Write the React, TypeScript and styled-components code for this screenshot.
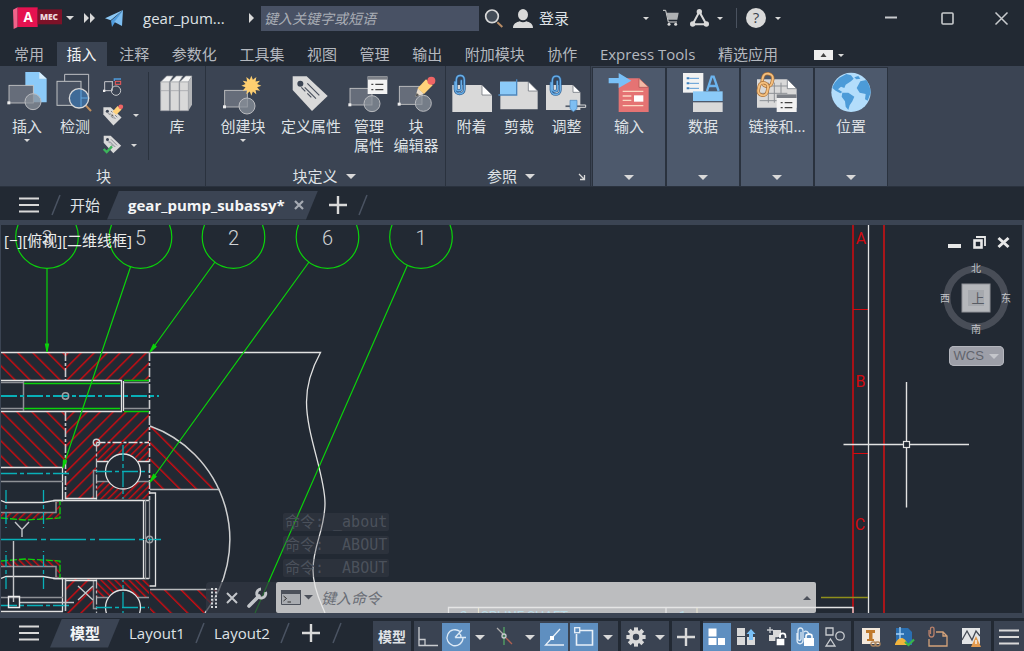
import React from "react";
import styled, { createGlobalStyle, css } from "styled-components";

const color = {
  base: "#222933",
  panel: "#3b4453",
  raised: "#4d596c",
  line: "#2a323e",
  text: "#dfe2e6",
  dim: "#b4b8bf",
  glyph: "#d9d9d9",
  active: "#5f8fc0",
};

const Global = createGlobalStyle`
  * { box-sizing: border-box; }
  body {
    margin: 0;
    background: ${color.base};
    color: ${color.text};
    font-family: "Open Sans", "Noto Sans CJK SC", sans-serif;
    font-size: 15px;
    line-height: 20px;
  }
  button, input { font: inherit; color: inherit; border: 0; padding: 0; margin: 0; background: none; }
  svg { display: block; flex: none; overflow: visible; }
`;

const App = styled.div`
  display: flex;
  flex-direction: column;
  min-height: 100vh;
`;

/* ---------- shared parts ---------- */

const IconButton = styled.button<{ $w?: number }>`
  display: flex;
  align-items: center;
  justify-content: center;
  flex: none;
  width: ${(p) => p.$w ?? 20}px;
  height: 28px;
`;

const Down = ({ w = 8, c = color.glyph }: { w?: number; c?: string }) => (
  <svg width={w} height={w / 2} viewBox="0 0 8 4">
    <path d="M0 0H8L4 4Z" fill={c} />
  </svg>
);

const Slash = () => (
  <svg width="10" height="20" viewBox="0 0 10 20">
    <path d="M9 0L1 20" stroke="#4a5362" strokeWidth="1.5" />
  </svg>
);

const Menu = () => (
  <svg width="20" height="16" viewBox="0 0 20 16">
    <path d="M0 1.5H20M0 8H20M0 14.5H20" stroke={color.glyph} strokeWidth="2" />
  </svg>
);

const Plus = ({ s = 18 }: { s?: number }) => (
  <svg width={s} height={s} viewBox="0 0 18 18">
    <path d="M9 0V18M0 9H18" stroke={color.glyph} strokeWidth="2.4" />
  </svg>
);

/* ---------- title bar ---------- */

const TitleBar = styled.header`
  display: flex;
  align-items: center;
  height: 36px;
  padding-left: 13px;
`;

const FileName = styled.h1`
  margin: 0 0 0 16px;
  width: 98px;
  font-size: 15px;
  font-weight: 400;
  line-height: 20px;
  white-space: nowrap;
`;

const SearchBox = styled.input`
  flex: 0 1 218px;
  min-width: 80px;
  height: 25px;
  padding: 0 3px;
  background: #485164;
  font-size: 14px;
  &::placeholder { color: #a9adb5; opacity: 1; font-style: italic; }
`;

const Account = styled.button`
  display: flex;
  align-items: center;
  gap: 6px;
  margin-left: 5px;
  white-space: nowrap;
`;

const TitleTools = styled.div`
  display: flex;
  align-items: center;
  margin-left: 69px;
`;

const Divider = styled.span`
  width: 1px;
  height: 20px;
  margin: 0 9px 0 7px;
  background: #4a525f;
`;

const WindowButtons = styled.div`
  display: flex;
  margin-left: auto;
  margin-right: -3px;
`;

const Title = () => (
  <TitleBar>
    <IconButton $w={49} aria-label="应用程序菜单">
      <svg width="49" height="22" viewBox="40 22 147 66">
        <path d="M40 30L54 23V82L42 88Z" fill="#f0628a" />
        <path d="M54 23H114V82H54Z" fill="#e51250" />
        <path d="M114 29H187V74H114Z" fill="#7d1228" />
        <text x="85" y="66" fontSize="40" fontWeight="700" fontFamily="Open Sans, sans-serif" textAnchor="middle" fill="#fff">A</text>
        <text x="148" y="61" fontSize="25" fontWeight="800" fontFamily="Open Sans, sans-serif" textAnchor="middle" fill="#eed8dd">MEC</text>
      </svg>
    </IconButton>
    <IconButton $w={16} aria-label="展开菜单"><Down /></IconButton>
    <IconButton $w={22} aria-label="更多工具">
      <svg width="11" height="10" viewBox="0 0 11 10"><path d="M0 0L5 5L0 10ZM6 0L11 5L6 10Z" fill={color.glyph} /></svg>
    </IconButton>
    <IconButton $w={27} aria-label="共享">
      <svg width="18" height="17" viewBox="320 26 54 51">
        <path d="M374 26L320 51L337 57Z" fill="#8cc8f5" />
        <path d="M374 26L338 58L341 77L349 64Z" fill="#4f9bdc" />
        <path d="M374 26L348 62L371 74Z" fill="#7dbef2" />
      </svg>
    </IconButton>
    <FileName>gear_pum...</FileName>
    <IconButton $w={20} aria-label="展开搜索">
      <svg width="5" height="10" viewBox="0 0 5 10"><path d="M0 0L5 5L0 10Z" fill={color.glyph} /></svg>
    </IconButton>
    <SearchBox aria-label="搜索" placeholder="键入关键字或短语" />
    <IconButton $w={29} aria-label="搜索">
      <svg width="19" height="19" viewBox="1450 24 57 57">
        <path d="M1490 64L1505 78" stroke="#b98d66" strokeWidth="6" />
        <circle cx="1474" cy="46" r="19" fill="#434c57" stroke="#d9d9d9" strokeWidth="5" />
      </svg>
    </IconButton>
    <Account>
      <svg width="20" height="19" viewBox="0 0 60 57">
        <ellipse cx="30" cy="17" rx="15" ry="17" fill={color.glyph} />
        <path d="M0 57C0 44 10 40 20 37C26 41 34 41 40 37C50 40 60 44 60 57Z" fill={color.glyph} />
      </svg>
      登录
    </Account>
    <TitleTools>
      <IconButton $w={16} aria-label="帐户菜单"><Down w={6} /></IconButton>
      <IconButton $w={34} aria-label="应用商店">
        <svg width="16" height="16" viewBox="454 30 48 48">
          <path d="M454 31H462L470 66H496" fill="none" stroke={color.glyph} strokeWidth="3" />
          <path d="M464 38H501L497 59H469Z" fill="#aeb0b3" />
          <circle cx="472" cy="73" r="4.5" fill={color.glyph} />
          <circle cx="492" cy="73" r="4.5" fill={color.glyph} />
        </svg>
      </IconButton>
      <IconButton $w={23} aria-label="Autodesk">
        <svg width="19" height="18" viewBox="535 26 57 54">
          <path d="M563 34L543 72H584Z" fill="none" stroke={color.glyph} strokeWidth="6" />
          <circle cx="563" cy="34" r="8" fill={color.glyph} />
          <circle cx="543" cy="71" r="8" fill={color.glyph} />
          <circle cx="584" cy="71" r="8" fill={color.glyph} />
        </svg>
      </IconButton>
      <IconButton $w={18} aria-label="Autodesk 菜单"><Down w={6} /></IconButton>
      <Divider />
      <IconButton aria-label="帮助">
        <svg width="20" height="20" viewBox="0 0 20 20">
          <circle cx="10" cy="10" r="10" fill={color.glyph} />
          <text x="10" y="15" fontSize="15" fontWeight="400" fontFamily="Open Sans, sans-serif" textAnchor="middle" fill="#3c434d">?</text>
        </svg>
      </IconButton>
      <IconButton $w={24} aria-label="帮助菜单"><Down w={6} /></IconButton>
    </TitleTools>
    <WindowButtons>
      <IconButton $w={56} aria-label="最小化">
        <svg width="12" height="12" viewBox="0 0 12 12"><path d="M0 5.5H12" stroke="#c9cbce" strokeWidth="2" /></svg>
      </IconButton>
      <IconButton $w={57} aria-label="最大化">
        <svg width="13" height="13" viewBox="0 0 13 13"><rect x="1" y="1" width="11" height="11" rx="1" fill="none" stroke="#c9cbce" strokeWidth="1.6" /></svg>
      </IconButton>
      <IconButton $w={51} aria-label="关闭">
        <svg width="13" height="13" viewBox="0 0 13 13"><path d="M.5.5L12.5 12.5M12.5.5L.5 12.5" stroke="#c9cbce" strokeWidth="1.5" /></svg>
      </IconButton>
    </WindowButtons>
  </TitleBar>
);

/* ---------- ribbon tabs ---------- */

const TabRow = styled.nav`
  display: flex;
  align-items: flex-end;
  height: 30px;
  padding-left: 4px;
`;

const TabList = styled.div`
  display: flex;
  justify-content: space-between;
  flex: 0 1 784px;
`;

const RibbonTab = styled.button<{ $on?: boolean }>`
  height: 24px;
  padding: 0 10px;
  line-height: 24px;
  white-space: nowrap;
  color: ${(p) => (p.$on ? "#f2f3f5" : color.dim)};
  background: ${(p) => (p.$on ? color.panel : "transparent")};
`;

const tabs = ["常用", "插入", "注释", "参数化", "工具集", "视图", "管理", "输出", "附加模块", "协作", "Express Tools", "精选应用"];

const MinimizeRibbon = styled.button`
  display: flex;
  align-items: center;
  gap: 5px;
  height: 22px;
  margin-left: 26px;
`;

/* ---------- ribbon ---------- */

const Ribbon = styled.section`
  display: flex;
  height: 121px;
  padding-left: 1px;
  background: ${color.panel};
  border-bottom: 1px solid ${color.line};
`;

const Panel = styled.section<{ $w: number; $pad?: number }>`
  display: flex;
  flex-direction: column;
  flex: none;
  width: ${(p) => p.$w}px;
  padding: 6px 0 0 ${(p) => p.$pad ?? 0}px;
  border-right: 1px solid ${color.line};
`;

const PanelBody = styled.div`
  display: flex;
  flex: 1;
`;

const PanelFoot = styled.footer<{ $end?: number }>`
  display: flex;
  align-items: center;
  justify-content: center;
  gap: 8px;
  height: 20px;
  padding-right: ${(p) => p.$end ?? 0}px;
  position: relative;
`;

const Launcher = styled.button`
  position: absolute;
  right: 5px;
  bottom: 6px;
`;

const Tool = styled.button<{ $w: number }>`
  display: flex;
  flex-direction: column;
  align-items: center;
  flex: none;
  width: ${(p) => p.$w}px;
  & > span { margin: 5px 0 3px; line-height: 19px; white-space: pre; text-align: center; }
`;

const SmallTools = styled.div`
  display: flex;
  flex-direction: column;
  width: 51px;
  height: 88px;
  padding-left: 5px;
  border-right: 1px solid ${color.line};
`;

const SmallTool = styled.button`
  display: flex;
  align-items: center;
  gap: 10px;
  height: 30px;
`;

const Collapsed = styled.button`
  display: flex;
  flex-direction: column;
  align-items: center;
  flex: none;
  width: 72px;
  height: 118px;
  margin: 2px 0 0 2px;
  padding: 4px 0 6px;
  background: ${color.raised};
  outline: 1px solid ${color.line};
  & > span { margin-top: 5px; line-height: 19px; }
  & > svg:last-child { margin-top: auto; }
`;

const Big = ({ x, children }: { x: number; children: React.ReactNode }) => (
  <svg width="40" height="40" viewBox={`${x} 18 120 120`}>{children}</svg>
);

const Block = ({ x, y, w = 75, h = 54, cx, cy }: { x: number; y: number; w?: number; h?: number; cx: number; cy: number }) => (
  <g>
    <rect x={x} y={y} width={w} height={h} fill="#666d7a" stroke="#c9c9c9" strokeWidth="2.5" />
    <circle cx={cx} cy={cy} r="24" fill="#8a909a" fillOpacity=".75" stroke="#b9bbbf" strokeWidth="3" />
    <rect x={x - 5} y={y + h - 5} width="9" height="9" fill="#eee" />
  </g>
);

const Sheet = ({ x, y, w, h, f = 26 }: { x: number; y: number; w: number; h: number; f?: number }) => (
  <g>
    <path d={`M${x} ${y}H${x + w - f}L${x + w} ${y + f}V${y + h}H${x}Z`} fill="#d9d9d9" />
    <path d={`M${x + w - f} ${y}V${y + f}H${x + w}Z`} fill="#fff" stroke="#5a606b" strokeWidth="2" />
  </g>
);

const Clip = ({ x, y }: { x: number; y: number }) => (
  <g transform={`translate(${x} ${y})`} fill="none" strokeLinecap="round">
    <path d="M3 20V42C3 60 31 60 31 42V14C31 -4 7 -4 7 14V40C7 48 22 48 22 40V16" stroke="#2f5f92" strokeWidth="8" />
    <path d="M3 20V42C3 60 31 60 31 42V14C31 -4 7 -4 7 14V40C7 48 22 48 22 40V16" stroke="#69aee6" strokeWidth="4" />
  </g>
);

const Tag = ({ t }: { t?: string }) => (
  <g transform={t}>
    <path d="M8 31H50L113 90L66 135L8 72Z" fill="#d9d9d9" />
    <circle cx="31" cy="53" r="9" fill="#3b4453" />
    <path d="M52 52L88 88M44 64L78 98M34 64L46 76M52 82L64 94" stroke="#4a515e" strokeWidth="3.5" />
  </g>
);

const Pencil = ({ t }: { t?: string }) => (
  <g transform={t}>
    <path d="M376 92L384 66L402 84Z" fill="#e8dccb" />
    <path d="M383 67L408 40L428 58L402 84Z" fill="#ffd27a" />
    <circle cx="424" cy="44" r="12" fill="#ef6565" />
    <path d="M376 92L380 81L388 88Z" fill="#555" />
  </g>
);

const Star = () => {
  const pts = Array.from({ length: 24 }, (_, i) => {
    const r = i % 2 ? 18 : 30;
    const a = (i * Math.PI) / 12;
    return `${(755 + r * Math.sin(a)).toFixed(1)},${(59 - r * Math.cos(a)).toFixed(1)}`;
  });
  return <polygon points={pts.join(" ")} fill="#ffcf70" />;
};

const RibbonPanels = () => (
  <Ribbon>
    <Panel $w={205} $pad={1}>
      <PanelBody>
        <Tool $w={50}>
          <Big x={22}>
            <path d="M77 18H119L141 38V109H77Z" fill="#8bcaf8" />
            <path d="M119 18V38H141Z" fill="#d9effd" />
            <Block x={28} y={58} w={73} h={53} cx={100} cy={107} />
          </Big>
          <span>插入</span><Down w={6} />
        </Tool>
        <Tool $w={46}>
          <Big x={165}>
            <path d="M194 46V25H266V98" fill="none" stroke="#bfc1c4" strokeWidth="3" />
            <rect x="171" y="46" width="72" height="72" fill="#495262" stroke="#bfc1c4" strokeWidth="3" />
            <path d="M257 118L273 135" stroke="#c08e5c" strokeWidth="6" />
            <circle cx="237" cy="97" r="29" fill="#3f6a97" stroke="#d9d9d9" strokeWidth="4" />
            <path d="M243 72V122M243 96H264" stroke="#62a7e0" strokeWidth="3" />
          </Big>
          <span>检测</span>
        </Tool>
        <SmallTools>
          <SmallTool aria-label="编辑参照">
            <svg width="20" height="20" viewBox="306 26 60 60">
              <path d="M311 40H336M311 40V67H334V40" fill="none" stroke="#c5c7ca" strokeWidth="3" />
              <circle cx="345" cy="67" r="14" fill="none" stroke="#c5c7ca" strokeWidth="3" />
              <path d="M340 38V32H360" fill="none" stroke="#4f9bdc" strokeWidth="4" />
              <rect x="343" y="39" width="16" height="9" fill="none" stroke="#ef5a5a" strokeWidth="3" />
              <path d="M306 64h7v7h-7z" fill="#eee" />
            </svg>
          </SmallTool>
          <SmallTool aria-label="编辑属性">
            <svg width="20" height="20" viewBox="306 117 60 60">
              <Tag t="translate(303 105) scale(.52)" />
              <Pencil t="translate(105 93) scale(.6)" />
            </svg>
            <Down w={6} />
          </SmallTool>
          <SmallTool aria-label="同步属性">
            <svg width="18" height="20" viewBox="309 207 54 60">
              <Tag t="translate(307 194) scale(.5)" />
              <path d="M311 249L320 258L336 241" fill="none" stroke="#3cb55a" strokeWidth="7" />
            </svg>
            <Down w={6} />
          </SmallTool>
        </SmallTools>
        <Tool $w={56}>
          <Big x={477}>
            {[488, 517, 545].map((x) => (
              <g key={x}>
                <path d={`M${x} 48L${x + 18} 30H${x + 37}L${x + 26} 48Z`} fill="#f4f4f4" stroke="#9a9da2" strokeWidth="2" />
                <path d={`M${x} 48H${x + 26}V134H${x}Z`} fill="#d9d9d9" stroke="#a3a6ab" strokeWidth="2" />
                <path d={`M${x} 74H${x + 26}`} stroke="#9a9da2" strokeWidth="2" />
              </g>
            ))}
            <path d="M571 48L582 30V116L571 134Z" fill="#b4b6b9" />
          </Big>
          <span>库</span>
        </Tool>
      </PanelBody>
      <PanelFoot>块</PanelFoot>
    </Panel>

    <Panel $w={240} $pad={3}>
      <PanelBody>
        <Tool $w={68}>
          <Big x={670}><Block x={675} y={73} w={68} h={50} cx={742} cy={120} /><Star /></Big>
          <span>创建块</span><Down w={6} />
        </Tool>
        <Tool $w={68}><Big x={3}><Tag /></Big><span>定义属性</span></Tool>
        <Tool $w={48}>
          <Big x={177}>
            <Block x={180} y={67} w={66} h={50} cx={246} cy={113} />
            <rect x="233" y="31" width="59" height="53" fill="#f2f2f2" />
            <path d="M233 31H292V41H233Z" fill="#7b7f86" />
            <path d="M244 55h6M244 71h6M256 55H280M256 71H280" stroke="#444" strokeWidth="4" />
          </Big>
          <span>{"管理\n属性"}</span>
        </Tool>
        <Tool $w={46}>
          <Big x={318}><Block x={328} y={61} w={68} h={54} cx={400} cy={112} /><Pencil /></Big>
          <span>{"块\n编辑器"}</span>
        </Tool>
      </PanelBody>
      <PanelFoot $end={6}>块定义 <Down w={10} /></PanelFoot>
    </Panel>

    <Panel $w={145} $pad={2}>
      <PanelBody>
        <Tool $w={47}><Big x={483}><Sheet x={484} y={57} w={119} h={81} f={30} /><Clip x={489} y={28} /></Big><span>附着</span></Tool>
        <Tool $w={48}>
          <Big x={627}>
            <Sheet x={631} y={47} w={112} h={83} f={28} />
            <rect x="630" y="47" width="48" height="39" fill="#8bcaf8" />
            <path d="M625 87H680V40" fill="none" stroke="#4b86bd" strokeWidth="4" />
          </Big>
          <span>剪裁</span>
        </Tool>
        <Tool $w={47}>
          <Big x={768}>
            <Sheet x={765} y={57} w={103} h={75} f={22} /><Clip x={777} y={30} />
            <path d="M822 117H884V124H822Z" fill="#3b4453" stroke="#d9d9d9" strokeWidth="3" />
            <path d="M837 103H858V128L847 137L837 128Z" fill="#7dbef2" stroke="#4b86bd" strokeWidth="2" />
          </Big>
          <span>调整</span>
        </Tool>
      </PanelBody>
      <PanelFoot $end={16}>
        参照 <Down w={10} />
        <Launcher aria-label="参照设置">
          <svg width="6" height="6" viewBox="0 0 6 6"><path d="M0 0L5 5M5.5 1V5.5H1" stroke={color.glyph} strokeWidth="1.3" fill="none" /></svg>
        </Launcher>
      </PanelFoot>
    </Panel>

    <Collapsed>
      <Big x={70}>
        <path d="M99 37H160L189 64V138H99Z" fill="#e57373" />
        <path d="M160 37V64H189Z" fill="#f3b9a5" stroke="#a94f50" strokeWidth="2" />
        <path d="M111 76H173M111 90H137M111 103H137M111 119H173" stroke="#fbd9c3" strokeWidth="4" />
        <path d="M145 88H173V107H145Z" fill="#fff" />
        <path d="M69 36H99V21L137 44L99 66V52H69Z" fill="#79c0f7" />
      </Big>
      <span>输入</span><Down w={10} />
    </Collapsed>
    <Collapsed>
      <Big x={292}>
        <path d="M292 21H353V80H292Z" fill="#f2f2f2" />
        <path d="M303 37h8M303 52h8M303 67h8" stroke="#3d7fbb" strokeWidth="6" />
        <path d="M311 37H340M311 52H340M311 67H340" stroke="#5b9bd5" strokeWidth="3" />
        <path d="M364 75L378 32H384L399 75M368 60H395" fill="none" stroke="#6cb4ee" strokeWidth="7" />
        <path d="M322 76H411V105H322Z" fill="#8bcaf8" />
        <path d="M322 109H411V138H322Z" fill="#d9d9d9" />
      </Big>
      <span>数据</span><Down w={10} />
    </Collapsed>
    <Collapsed>
      <Big x={514}>
        <Sheet x={514} y={40} w={119} h={85} f={28} />
        <path d="M532 60H605M522 82H605M522 104H575M548 50V110M566 50V110M586 50V84" stroke="#8d9196" strokeWidth="3" />
        <path d="M573 85H633V138H573Z" fill="#f2f2f2" />
        <path d="M573 85H633V96H573Z" fill="#7b7f86" />
        <path d="M585 110h6M585 125h6M597 110H620M597 125H620" stroke="#444" strokeWidth="4" />
        <g fill="none">
          <rect x="530" y="23" width="30" height="38" rx="14" stroke="#a8703a" strokeWidth="10" transform="rotate(12 545 44)" />
          <rect x="530" y="23" width="30" height="38" rx="14" stroke="#f5c07e" strokeWidth="6" transform="rotate(12 545 44)" />
          <rect x="519" y="50" width="27" height="38" rx="13" stroke="#a8703a" strokeWidth="10" transform="rotate(12 532 69)" />
          <rect x="519" y="50" width="27" height="38" rx="13" stroke="#f5c07e" strokeWidth="6" transform="rotate(12 532 69)" />
        </g>
      </Big>
      <span>链接和...</span><Down w={10} />
    </Collapsed>
    <Collapsed>
      <Big x={736}>
        <circle cx="796" cy="79" r="59" fill="#b3ddfb" />
        <path d="M760 36C752 44 742 55 740 66L750 74L764 82L770 78L757 70L766 62L776 66L780 56L796 46L804 38L796 28L782 24Z" fill="#4c9bd8" />
        <path d="M770 80L788 80L806 92L800 106L792 118L788 132L780 122L778 106L768 92Z" fill="#4c9bd8" />
        <path d="M818 30L806 34L812 40L824 38ZM824 46L842 42C850 54 855 68 855 80L846 104L838 100L840 84L822 80L813 66Z" fill="#4c9bd8" />
      </Big>
      <span>位置</span><Down w={10} />
    </Collapsed>
  </Ribbon>
);

/* ---------- document tabs ---------- */

const DocTabs = styled.nav`
  display: flex;
  align-items: center;
  height: 32px;
  margin-top: 1px;
  padding: 2px 0 0 15px;
`;

const Sheared = styled.div<{ $h: number }>`
  display: flex;
  align-items: center;
  height: ${(p) => p.$h}px;
  background: ${color.panel};
  clip-path: polygon(12px 0, 100% 0, calc(100% - 12px) 100%, 0 100%);
  color: #f4f5f6;
  font-weight: 700;
`;

const DocTab = styled(Sheared)`
  gap: 9px;
  width: 211px;
  margin-left: 7px;
  padding-left: 21px;
`;

const PlainTab = styled.button`
  padding: 0 0 0 9px;
  white-space: nowrap;
`;

const FileMenu = styled(IconButton)`
  margin-right: 8px;
`;

const Strip = styled.div`
  height: 5px;
  background: ${color.panel};
`;

/* ---------- drawing area ---------- */

const Canvas = styled.main`
  position: relative;
  display: flex;
  flex: 1;
  min-height: 388px;
  border: solid ${color.panel};
  border-width: 0 2px 0 1px;
  overflow: hidden;
`;

const Drawing = styled.svg`
  position: absolute;
  inset: 0;
  width: 100%;
  height: 100%;
`;

const ViewLabel = styled.div`
  position: absolute;
  left: 3px;
  top: 5px;
  color: #eceded;
`;

const ViewTools = styled.aside`
  position: absolute;
  top: 10px;
  right: 12px;
  display: flex;
  flex-direction: column;
  align-items: center;
  width: 68px;
`;

const ViewWindow = styled.div`
  display: flex;
  align-self: flex-end;
  justify-content: space-between;
  width: 62px;
  height: 14px;
  align-items: center;
`;

const Wcs = styled.button`
  display: flex;
  align-items: center;
  justify-content: space-between;
  width: 55px;
  height: 20px;
  margin-top: 14px;
  padding: 0 5px;
  border-radius: 5px;
  background: #9d9fa8;
  box-shadow: inset 0 0 0 1px #b4b6bd;
  color: #61646c;
  font-family: "Liberation Sans", sans-serif;
  font-size: 13px;
`;

const History = styled.ol`
  position: absolute;
  left: 282px;
  bottom: 36px;
  margin: 0;
  padding: 0;
  list-style: none;
  display: grid;
  gap: 5px;
`;

const HistoryLine = styled.li`
  width: 106px;
  height: 18px;
  padding-left: 2px;
  border-radius: 2px;
  background: rgba(70, 74, 84, 0.3);
  color: #4b515b;
  font-family: "DejaVu Sans Mono", "Noto Sans CJK SC", monospace;
  line-height: 18px;
  white-space: pre;
`;

const CommandLine = styled.form`
  position: absolute;
  left: 205px;
  right: 206px;
  bottom: 0;
  display: flex;
  height: 31px;
`;

const CommandGrip = styled.div`
  display: flex;
  align-items: center;
  gap: 9px;
  width: 70px;
  padding-left: 5px;
  border-radius: 4px 0 0 0;
  background: rgba(50, 56, 67, 0.7);
`;

const CommandField = styled.div`
  display: flex;
  align-items: center;
  flex: 1;
  gap: 3px;
  padding: 0 5px;
  border-radius: 2px;
  background: rgba(230, 230, 230, 0.79);
`;

const CommandInput = styled.input`
  flex: 1;
  min-width: 0;
  padding-left: 5px;
  outline: 0;
  color: #4c515b;
  &::placeholder { color: #6a6e76; opacity: 1; font-style: italic; }
`;

const G = "#0bd20b";
const R = "#d40a0f";
const W = "#e2e2e2";
const GR = "#8e9196";
const C = "#08b0b8";

const Hatch = ({ id, dir, s, x, y }: { id: string; dir: 1 | -1; s: number; x: number; y: number }) => (
  <pattern id={id} width={s * 0.7071} height="10" patternUnits="userSpaceOnUse" patternTransform={`translate(${x} ${y}) rotate(${dir * 45})`}>
    <path d="M.7 0V10" stroke={R} strokeWidth="1.4" />
  </pattern>
);

const ShaftHalf = () => (
  <g fill="none" stroke={W} strokeWidth="1.3">
    <path d="M96.500 443H149V461H138A18 18 0 0 0 108 461H96.500Z" fill="url(#fine)" stroke="none" />
    <path d="M96.500 482H109A18 18 0 0 0 137 482H149V499H96.500Z" fill="url(#fine)" stroke="none" />
    <path d="M1 512.500H56V502H60V519L25 520L1 518Z" fill="url(#fineBack)" stroke="none" />
    <circle cx="123" cy="471.500" r="17.500" />
    <path d="M96 461.500H108M138 461.500H149" />
    <path d="M96 481.500H108M138 481.500H149M93.500 499V470.500H96" stroke={GR} strokeWidth="1.5" />
    <path d="M96.500 442.500V500" stroke="#b8babd" strokeDasharray="9 2 3 2" />
    <path d="M96.500 442.500H149" strokeDasharray="9 2 3 2" />
    <path d="M123 445V499M96 471.500H149" stroke={C} strokeDasharray="16 3 4 3" />
    <path d="M53 500.500H149M65 498.500H97" />
    <path d="M143.500 500V539M149.500 493H155.500V539" />
    <path d="M145.500 500V539M149.500 500V539" stroke={GR} />
    <path d="M1 500.500L6 502.500H43L55 500.500H62.500V467.500" />
    <path d="M1 512.500H56V502" stroke={GR} strokeWidth="1.5" />
    <path d="M1 518L25 520L60 518V501" stroke={G} strokeDasharray="7 2" />
    <path d="M6 490V528M43.500 490V528" stroke={C} strokeDasharray="12 3 4 3" />
    <path d="M1 481.500H63" stroke={GR} strokeWidth="1.5" />
    <path d="M1 473.500H72" stroke={C} strokeWidth="1.6" strokeDasharray="16 3 4 3" />
    <path d="M1 467.500H63" />
    <path d="M150 489.500H220" stroke="#b8babd" strokeWidth="1.5" />
  </g>
);

const balloons: [number, string][] = [[47, "3"], [140.5, "5"], [233.5, "2"], [327.5, "6"], [421, "1"]];

const PumpDrawing = () => (
  <Drawing viewBox="1 225 1021 388" preserveAspectRatio="xMinYMin slice" role="img" aria-label="gear_pump_subassy">
    <defs>
      <Hatch id="back" dir={-1} s={15} x={16} y={352} />
      <Hatch id="fwd" dir={1} s={13} x={81} y={352} />
      <Hatch id="dome" dir={-1} s={16.600} x={212} y={489} />
      <Hatch id="fine" dir={1} s={7} x={100} y={443} />
      <Hatch id="fineBack" dir={1} s={7} x={4} y={512} />
    </defs>
    <path d="M1 353H65V380H1ZM1 412H65V467H1Z" fill="url(#back)" />
    <path d="M66 353H149V380H66ZM66 412H149V442H96V470H93V499H66ZM66 579H93V613H66Z" fill="url(#fwd)" />
    <path d="M150 426A120.800 120.800 0 0 1 219 489H150Z" fill="url(#dome)" />
    <path d="M150 590H217A120.800 120.800 0 0 1 205 613H150Z" fill="url(#dome)" />
    <g fill="none" stroke={W} strokeWidth="1.3">
      <path d="M1 352.500H320.500C312 368 306.500 385 306.500 402C306.500 435 325 475 325 503C325 530 313 545 313 570C313 590 322 605 325 613" />
      <path d="M1 380.500H121.500V411.500H1M123.500 381V411" />
      <path d="M65.500 352V380M65.500 412V499M149.500 352V500" stroke="#c9cacc" strokeWidth="1.6" strokeDasharray="9 2 3 2" />
      <path d="M1 382.500H24M1 408.500H24M23.500 381V411M124 382.500H149M124 408.500H149" stroke={GR} strokeWidth="1.5" />
      <path d="M24 383.500H120M24 408.500H120M124 380.500H149M124 411.500H149" stroke={G} strokeWidth="1.500" />
      <path d="M150 426A120.800 120.800 0 0 1 205 613" stroke="#cfd0d1" strokeWidth="1.5" />
      <path d="M1 396H159" stroke={C} strokeWidth="1.8" strokeDasharray="16 3 4 3" />
      <path d="M1 539.500H161" stroke={C} strokeWidth="1.5" strokeDasharray="36 4 5 4" />
    </g>
    <ShaftHalf />
    <g transform="matrix(1 0 0 -1 0 1079)"><ShaftHalf /></g>
    <g fill="none" stroke="#9fa2a6" strokeWidth="1.4">
      <circle cx="65.500" cy="396" r="3.200" />
      <circle cx="96.500" cy="442.500" r="3.200" stroke="#c9cacc" />
      <circle cx="149.500" cy="539.500" r="3.200" />
      <path d="M65.500 579V611" stroke="#c9cacc" strokeWidth="1.6" />
    </g>
    <g fill="none" stroke="#c3c5c8" strokeWidth="1.4">
      <path d="M15 522L22 529.500L29 522M22 529.500V537M13.500 541V602M19 602.500H74M78 586L93 600M93 586L78 600" />
      <path d="M8.500 596.500H19.500V607.500H8.500Z" stroke="#eee" />
    </g>
    <g fill="none" stroke={G} strokeWidth="1.2">
      {balloons.map(([x]) => <circle key={x} cx={x} cy="237" r="31.300" />)}
      <path d="M47 268V352M130.500 267L63 467M215 262L150 352M309 262L150 482M407.500 265L255 613" />
      <path d="M47 352L45.500 344H48.500ZM63 468L63.500 460L66.500 461ZM150 352L153.500 344.500L156 346.500ZM150 482L153.500 474.500L156 476.500Z" fill={G} />
    </g>
    <g fill="#d0d2d5" fontFamily="Roboto, sans-serif" fontSize="20" fontWeight="300" textAnchor="middle">
      {balloons.map(([x, n]) => <text key={n} x={x} y="245">{n}</text>)}
    </g>
    <g stroke={R} strokeWidth="1.500" fill="none">
      <path d="M853 225V613" />
      <path d="M884 225V613" stroke="#a8161a" strokeWidth="2" />
      <path d="M853 309.500H868M853 453.500H868" strokeWidth="1.200" />
    </g>
    <g fill={R} fontFamily="Roboto, sans-serif" fontSize="16" fontWeight="400" textAnchor="middle">
      <text x="861" y="244">A</text>
      <text x="860.500" y="387">B</text>
      <text x="860" y="530">C</text>
    </g>
    <path d="M868.500 225V613" stroke={W} strokeWidth="1.300" />
    <path d="M821 597.500H868" stroke="#8f8f1c" strokeWidth="1.600" />
    <path d="M448.500 613V607.500H853V613M666 607V613" fill="none" stroke={W} strokeWidth="1.300" />
    <path d="M478.500 608V613M697 608V613" stroke="#e8d27a" strokeWidth="1.200" />
    <g fill="#1fb4e8" fontFamily="Roboto, sans-serif" fontSize="13">
      <text x="460" y="620">2</text>
      <text x="481" y="620">SPLINE SHAFT</text>
      <text x="679" y="620">1</text>
    </g>
    <g stroke={W} fill="none">
      <path d="M843.500 444.500H903M910 444.500H969M906.500 382V441M906.500 448V507.500" strokeWidth="1.400" />
      <rect x="903.500" y="441.500" width="6" height="6" strokeWidth="1.200" />
    </g>
  </Drawing>
);

const ViewCube = () => (
  <svg width="76" height="76" viewBox="938 260 76 76" role="img" aria-label="ViewCube">
    <circle cx="976" cy="298" r="29" fill="none" stroke="#484d57" strokeWidth="7" />
    <rect x="962" y="284" width="28" height="28" fill="#b5b7bb" stroke="#8f9298" />
    <rect x="968" y="290" width="16" height="16" fill="#a6a9ae" />
    <g fill="#c2c4c8" fontFamily="Noto Sans CJK SC, sans-serif" fontSize="10" textAnchor="middle">
      <text x="976" y="272">北</text>
      <text x="976" y="333">南</text>
      <text x="945" y="302">西</text>
      <text x="1006" y="302">东</text>
      <text x="978" y="303" fontSize="13" fill="#585c64">上</text>
    </g>
  </svg>
);

const CubeSlot = styled.div`
  margin-top: 11px;
  height: 72px;
`;

/* ---------- status bar ---------- */

const StatusBar = styled.footer`
  display: flex;
  align-items: stretch;
  height: 33px;
`;

const Layouts = styled.nav`
  display: flex;
  align-items: center;
  height: 30px;
  padding-left: 15px;
`;

const ModelTab = styled(Sheared)`
  justify-content: center;
  width: 70px;
  margin-left: 7px;
`;

const LayoutTab = styled.button`
  width: 75px;
  padding-left: 9px;
  text-align: left;
`;

const StatusTools = styled.div`
  display: flex;
  gap: 3px;
  margin-left: auto;
  padding-top: 3px;
`;

const Group = styled.div`
  display: flex;
  align-items: center;
  background: #3a4352;
`;

const Cell = styled.button<{ $w?: number; $on?: boolean }>`
  display: flex;
  align-items: center;
  justify-content: center;
  width: ${(p) => p.$w ?? 28}px;
  height: 28px;
  margin-top: 2px;
  font-weight: 700;
  font-size: 14px;
  ${(p) => p.$on && css`background: ${color.active};`}
`;

const Gap = styled.span<{ $w?: number }>`
  width: ${(p) => p.$w ?? 2}px;
`;

const ArrowCell = ({ w = 20, label }: { w?: number; label: string }) => (
  <Cell $w={w} aria-label={label}><Down w={10} /></Cell>
);

const Glyph = ({ children }: { children: React.ReactNode }) => (
  <svg width="20" height="20" viewBox="0 0 20 20" fill="none" stroke="#c9ccd0" strokeWidth="1.3">{children}</svg>
);

const Status = () => (
  <StatusBar>
    <Layouts>
      <IconButton $w={28} aria-label="布局菜单"><Menu /></IconButton>
      <ModelTab $h={29}>模型</ModelTab>
      <LayoutTab>Layout1</LayoutTab>
      <Slash />
      <LayoutTab>Layout2</LayoutTab>
      <Slash />
      <IconButton $w={42} aria-label="新建布局"><Plus /></IconButton>
      <Slash />
    </Layouts>
    <StatusTools>
      <Group><Cell $w={38}>模型</Cell></Group>
      <Group>
        <Cell aria-label="正交"><Glyph><path d="M1 0V18.500H20M1 12.500H7V18.500" /></Glyph></Cell>
        <Cell $on aria-label="极轴追踪"><Glyph><path d="M14 4.500A8 8 0 1 0 17 11M9 10.500L16 3M9 10.500H20M13 6C14.500 7 15 9 15 10.500" stroke="#dce9f5" /></Glyph></Cell>
        <ArrowCell label="极轴设置" />
        <Cell $w={29} aria-label="等轴测草图">
          <Glyph><path d="M2 1L8 7" stroke="#aaa" /><path d="M9 0V18" stroke="#53a864" /><path d="M11 11L17 17" stroke="#b06050" /><circle cx="9" cy="9" r="2" /></Glyph>
        </Cell>
        <ArrowCell w={21} label="等轴测设置" />
        <Cell $on aria-label="对象捕捉追踪"><Glyph><path d="M20 18H1.500L16 2" stroke="#e8f0f8" /><path d="M6 9h4v4H6z" fill="#fff" stroke="none" /></Glyph></Cell>
        <Gap />
        <Cell $on aria-label="对象捕捉"><Glyph><path d="M6 3.500H18.500V18H2.500V7" stroke="#e8f0f8" strokeWidth="1.600" /><rect x=".7" y=".7" width="5" height="5" stroke="#e8f0f8" /></Glyph></Cell>
        <ArrowCell label="捕捉设置" />
      </Group>
      <Group>
        <Cell $w={29} aria-label="切换工作空间">
          <svg width="20" height="20" viewBox="-10 -10 20 20">
            {[0, 45, 90, 135].map((a) => <rect key={a} x="-2" y="-9.600" width="4" height="19.200" fill={color.glyph} transform={`rotate(${a})`} />)}
            <circle r="5" fill="none" stroke={color.glyph} strokeWidth="4" />
            <circle r="3.200" fill="#3a4352" />
          </svg>
        </Cell>
        <ArrowCell w={19} label="工作空间菜单" />
      </Group>
      <Group><Cell $w={28} aria-label="注释监视器"><Plus /></Cell></Group>
      <Group>
        <Cell $on aria-label="单位"><Glyph><path d="M1.500 1.500h8v8h-8zM1.500 11h8v7h-8zM11 11h7v7h-7z" fill="#fff" stroke="none" /></Glyph></Cell>
        <Cell $w={31} aria-label="快捷特性">
          <Glyph><path d="M0 1h8v8H0zM0 10h8v8H0zM10 10h8v8h-8z" fill={color.glyph} stroke="none" /><path d="M14 2L18.500 7H16V13H12V7H9.500Z" fill="#79c0f7" stroke="none" /></Glyph>
        </Cell>
        <Cell $w={29} aria-label="锁定用户界面">
          <Glyph><path d="M3 0V6M0 3H6" /><path d="M6 3H14V10H11V14H2V8H6Z" fill={color.glyph} stroke="none" /><path d="M9 11H18V19H9Z" fill="#fff" stroke="#3a4352" /><path d="M13 11V9C13 5.500 18.500 5.500 18.500 9V11" stroke="#fff" strokeWidth="1.600" /></Glyph>
        </Cell>
        <Cell $on aria-label="隔离对象">
          <Glyph><path d="M2 6V13C2 18 8 18 8 13V4C8 0 3 0 3 4V12C3 14 6 14 6 12V5" stroke="#dce9f5" /><path d="M9 5C11 3 14 5 14 8" stroke="#dce9f5" /><path d="M9 11H19V19H9Z" fill="#fff" stroke="none" /><path d="M11 11V9C11 6.500 17 6.500 17 9V11" stroke="#fff" strokeWidth="1.600" /></Glyph>
        </Cell>
        <Cell $w={32} aria-label="硬件加速"><Glyph><path d="M1 1H8V8H1ZM5.500 12L10 19H1Z" /><circle cx="15" cy="9" r="4.200" /></Glyph></Cell>
      </Group>
      <Group>
        <Cell $w={34} aria-label="标准件">
          <Glyph><path d="M1 1H19V17H1Z" fill="#f3e8db" stroke="none" /><path d="M5 3H14V6H11.500V12H13V14H6V12H8V6H5Z" fill="#c07a2c" stroke="none" /><rect x="10" y="15" width="5" height="4" rx="2" stroke="#b08860" /><rect x="14" y="15" width="5" height="4" rx="2" stroke="#b08860" /></Glyph>
        </Cell>
        <Cell $w={33} aria-label="图纸检查">
          <Glyph><path d="M1 1H13L17 5V18H1Z" fill="#2b6fb0" stroke="none" /><path d="M0 17C4 8 10 10 13 18H0Z" fill="#f2b43c" stroke="none" /><path d="M5 0V12M1 7H9" stroke="#a8d4f7" /><path d="M10 15L13.500 18L19 12.500" stroke="#39b54a" strokeWidth="2.200" /></Glyph>
        </Cell>
        <Cell $w={33} aria-label="外部参照">
          <Glyph><path d="M1 12V19H19V9L15 5H8M19 9H15V5" stroke="#d3a27a" /><path d="M1 3V7C1 11 6 11 6 7V2C6 -.5 2.500 -.5 2.500 2V7" stroke="#b8806a" /></Glyph>
        </Cell>
        <Cell $w={33} aria-label="性能警告">
          <Glyph><path d="M1 1H19V17H1Z" fill="#e2e4e6" stroke="none" /><path d="M1 13L6 4L11 13L15 4L19 9" stroke="#444a55" /><path d="M15 9L20 20H10Z" fill="#e39a4e" stroke="none" /><path d="M15 13V17" stroke="#fff" /></Glyph>
        </Cell>
        <Gap $w={4} />
      </Group>
      <Group><Cell $w={30} aria-label="自定义"><Menu /></Cell></Group>
    </StatusTools>
  </StatusBar>
);

export default function Main() {
  return (
    <App>
      <Global />
      <Title />
      <TabRow>
        <TabList>
          {tabs.map((t) => <RibbonTab key={t} $on={t === "插入"}>{t}</RibbonTab>)}
        </TabList>
        <MinimizeRibbon aria-label="最小化功能区">
          <svg width="19" height="10" viewBox="0 0 19 10"><path d="M0 0H19V10H0Z" fill="#eee" /><path d="M9.500 3L12.500 7H6.500Z" fill="#444" /></svg>
          <Down w={6} />
        </MinimizeRibbon>
      </TabRow>
      <RibbonPanels />
      <DocTabs>
        <FileMenu $w={28} aria-label="文件菜单"><Menu /></FileMenu>
        <Slash />
        <PlainTab>开始</PlainTab>
        <DocTab $h={29}>
          gear_pump_subassy*
          <svg width="10" height="10" viewBox="0 0 10 10" role="img" aria-label="关闭"><path d="M1 1L9 9M9 1L1 9" stroke="#a6abb3" strokeWidth="2.200" /></svg>
        </DocTab>
        <IconButton $w={40} aria-label="新建图形"><Plus /></IconButton>
        <Slash />
      </DocTabs>
      <Strip />
      <Canvas>
        <PumpDrawing />
        <ViewLabel>[−][俯视][二维线框]</ViewLabel>
        <ViewTools>
          <ViewWindow>
            <svg width="13" height="13" viewBox="0 0 13 13"><path d="M0 8H13V12H0Z" fill="#e8e8e8" /></svg>
            <svg width="13" height="13" viewBox="0 0 13 13"><path d="M3 1H12V10" fill="none" stroke="#e8e8e8" strokeWidth="1.800" /><rect x="1.500" y="4.500" width="7" height="7" fill="none" stroke="#e8e8e8" strokeWidth="2.600" /></svg>
            <svg width="13" height="13" viewBox="0 0 13 13"><path d="M1.500 2L11.500 11M11.500 2L1.500 11" stroke="#e8e8e8" strokeWidth="3" /></svg>
          </ViewWindow>
          <CubeSlot><ViewCube /></CubeSlot>
          <Wcs>WCS <Down w={10} c="#c4c6cb" /></Wcs>
        </ViewTools>
        <History>
          <HistoryLine>命令: _about</HistoryLine>
          <HistoryLine>命令:  ABOUT</HistoryLine>
          <HistoryLine>命令:  ABOUT</HistoryLine>
        </History>
        <CommandLine onSubmit={(e) => e.preventDefault()}>
          <CommandGrip>
            <svg width="6" height="20" viewBox="0 0 6 20"><path d="M1 0V20M5 0V20" stroke="#d4d6d9" strokeWidth="2" strokeDasharray="2 1.600" /></svg>
            <svg width="12" height="12" viewBox="0 0 12 12"><path d="M1 1L11 11M11 1L1 11" stroke="#c3c6ca" strokeWidth="2" /></svg>
            <svg width="20" height="20" viewBox="0 0 20 20"><path d="M2 18L12 8" stroke="#c3c6ca" strokeWidth="3.600" strokeLinecap="round" /><path d="M18.500 4A4.500 4.500 0 1 1 14 1" fill="none" stroke="#c3c6ca" strokeWidth="3" /></svg>
          </CommandGrip>
          <CommandField>
            <svg width="20" height="15" viewBox="0 0 20 15"><path d="M.5.5H19.500V14.500H.5Z" fill="#a9acb1" stroke="#4c515b" /><path d="M0 0H20V4H0Z" fill="#4c515b" /><path d="M2.500 6L5.500 8.500L2.500 11M6.500 12H10" fill="none" stroke="#333" /></svg>
            <Down w={9} c="#4c515b" />
            <CommandInput aria-label="命令" placeholder="键入命令" />
            <svg width="8" height="4" viewBox="0 0 8 4"><path d="M0 4H8L4 0Z" fill="#4c515b" /></svg>
          </CommandField>
        </CommandLine>
      </Canvas>
      <Strip />
      <Status />
    </App>
  );
}
